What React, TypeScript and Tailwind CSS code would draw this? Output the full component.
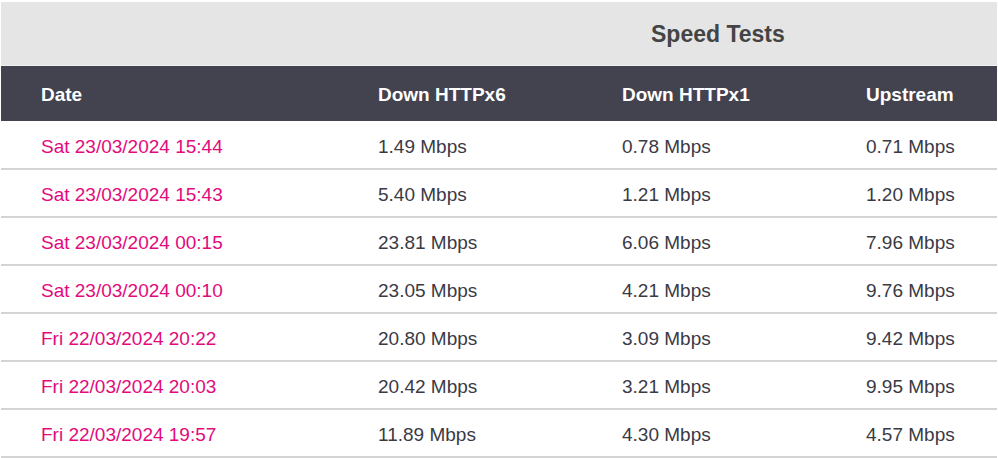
const rows: [string, string, string, string][] = [
  ["Sat 23/03/2024 15:44", "1.49 Mbps", "0.78 Mbps", "0.71 Mbps"],
  ["Sat 23/03/2024 15:43", "5.40 Mbps", "1.21 Mbps", "1.20 Mbps"],
  ["Sat 23/03/2024 00:15", "23.81 Mbps", "6.06 Mbps", "7.96 Mbps"],
  ["Sat 23/03/2024 00:10", "23.05 Mbps", "4.21 Mbps", "9.76 Mbps"],
  ["Fri 22/03/2024 20:22", "20.80 Mbps", "3.09 Mbps", "9.42 Mbps"],
  ["Fri 22/03/2024 20:03", "20.42 Mbps", "3.21 Mbps", "9.95 Mbps"],
  ["Fri 22/03/2024 19:57", "11.89 Mbps", "4.30 Mbps", "4.57 Mbps"],
];

export default function App() {
  return (
    <div className="w-[998px] h-[458px] bg-white pt-[2px] px-[1px] overflow-hidden font-['Liberation_Sans',Arial,sans-serif]">
      <table className="w-[996px] border-collapse table-fixed">
        <colgroup>
          <col className="w-[337px]" />
          <col className="w-[244px]" />
          <col className="w-[244px]" />
          <col className="w-[171px]" />
        </colgroup>
        <thead>
          <tr className="bg-[#e5e5e5] h-[63px] border-b border-[#f2f2f2]">
            <th colSpan={2} />
            <th colSpan={2} className="text-left pl-[69px] pt-[2px] text-[23px] font-bold text-[#444444]">
              Speed Tests
            </th>
          </tr>
          <tr className="bg-[#43434f] h-[56px] text-white text-[19px] font-bold text-left">
            <th className="pl-10 pt-[3px] text-left">Date</th>
            <th className="pl-10 pt-[3px] text-left">Down HTTPx6</th>
            <th className="pl-10 pt-[3px] text-left">Down HTTPx1</th>
            <th className="pl-10 pt-[3px] text-left">Upstream</th>
          </tr>
        </thead>
        <tbody className="text-[19px] text-[#3a3a45]">
          {rows.map((r) => (
            <tr key={r[0]} className="h-[48px] border-b-[2px] border-[#d4d4d4]">
              <td className="pl-10 pt-[5px] text-[#e20a7d]">{r[0]}</td>
              <td className="pl-10 pt-[5px]">{r[1]}</td>
              <td className="pl-10 pt-[5px]">{r[2]}</td>
              <td className="pl-10 pt-[5px]">{r[3]}</td>
            </tr>
          ))}
        </tbody>
      </table>
    </div>
  );
}
